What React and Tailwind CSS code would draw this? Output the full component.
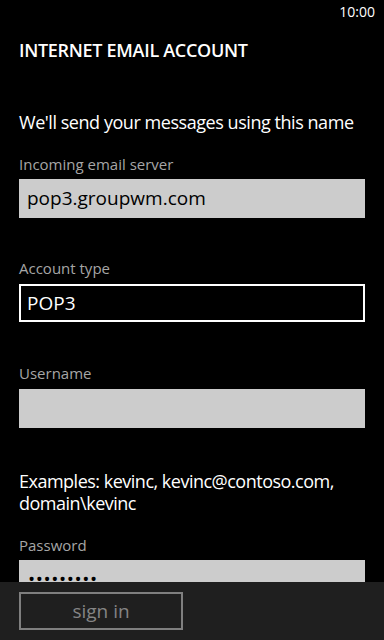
export default function App() {
  return (
    <div
      className="w-[384px] h-[640px] bg-black flex flex-col overflow-hidden text-white"
      style={{ fontFamily: '"Open Sans", "Noto Sans", sans-serif' }}
    >
      {/* scrolling form area */}
      <div className="h-[582px] overflow-hidden shrink-0">
        <div className="h-[24px] flex justify-end pr-[9px] text-[14px] leading-[24px]">10:00</div>

        <div className="px-[19px]">
          <h1 className="mt-[14px] text-[18px] leading-[24px] font-semibold tracking-[-0.3px]">INTERNET EMAIL ACCOUNT</h1>

          <p className="mt-[48px] text-[18px] leading-[24px] tracking-[-0.45px] whitespace-nowrap">
            We'll send your messages using this name
          </p>

          <div className="mt-[20px] text-[15px] leading-[20px] text-[#a6a6a6]">Incoming email server</div>
          <div className="mt-[5px] h-[39px] bg-[#cccccc] flex items-center pl-[8px] text-[19px] text-black">
            pop3.groupwm.com
          </div>

          <div className="mt-[40px] text-[15px] leading-[20px] text-[#a6a6a6]">Account type</div>
          <div className="mt-[6px] h-[38px] border-2 border-white flex items-center pl-[6px] text-[19px]">POP3</div>

          <div className="mt-[41px] text-[15px] leading-[20px] text-[#a6a6a6]">Username</div>
          <div className="mt-[6px] h-[39px] bg-[#cccccc]" />

          <p className="mt-[42px] text-[18px] leading-[22px] tracking-[-0.5px]">
            Examples: kevinc, kevinc@contoso.com,
            <br />
            domain\kevinc
          </p>

          <div className="mt-[21px] text-[15px] leading-[20px] text-[#a6a6a6]">Password</div>
          <div className="mt-[5px] h-[39px] bg-[#cccccc] pt-[9px] pl-[9px] text-[19px] leading-[20px] text-black tracking-[0.6px]">
            •••••••••
          </div>
        </div>
      </div>

      {/* app bar */}
      <div className="flex-1 bg-[#1f1f1f] px-[19px] pt-[10px]">
        <button className="w-[164px] h-[38px] border-2 border-[#7f7f7f] text-[#858585] text-[19px] leading-none">
          sign in
        </button>
      </div>
    </div>
  )
}
